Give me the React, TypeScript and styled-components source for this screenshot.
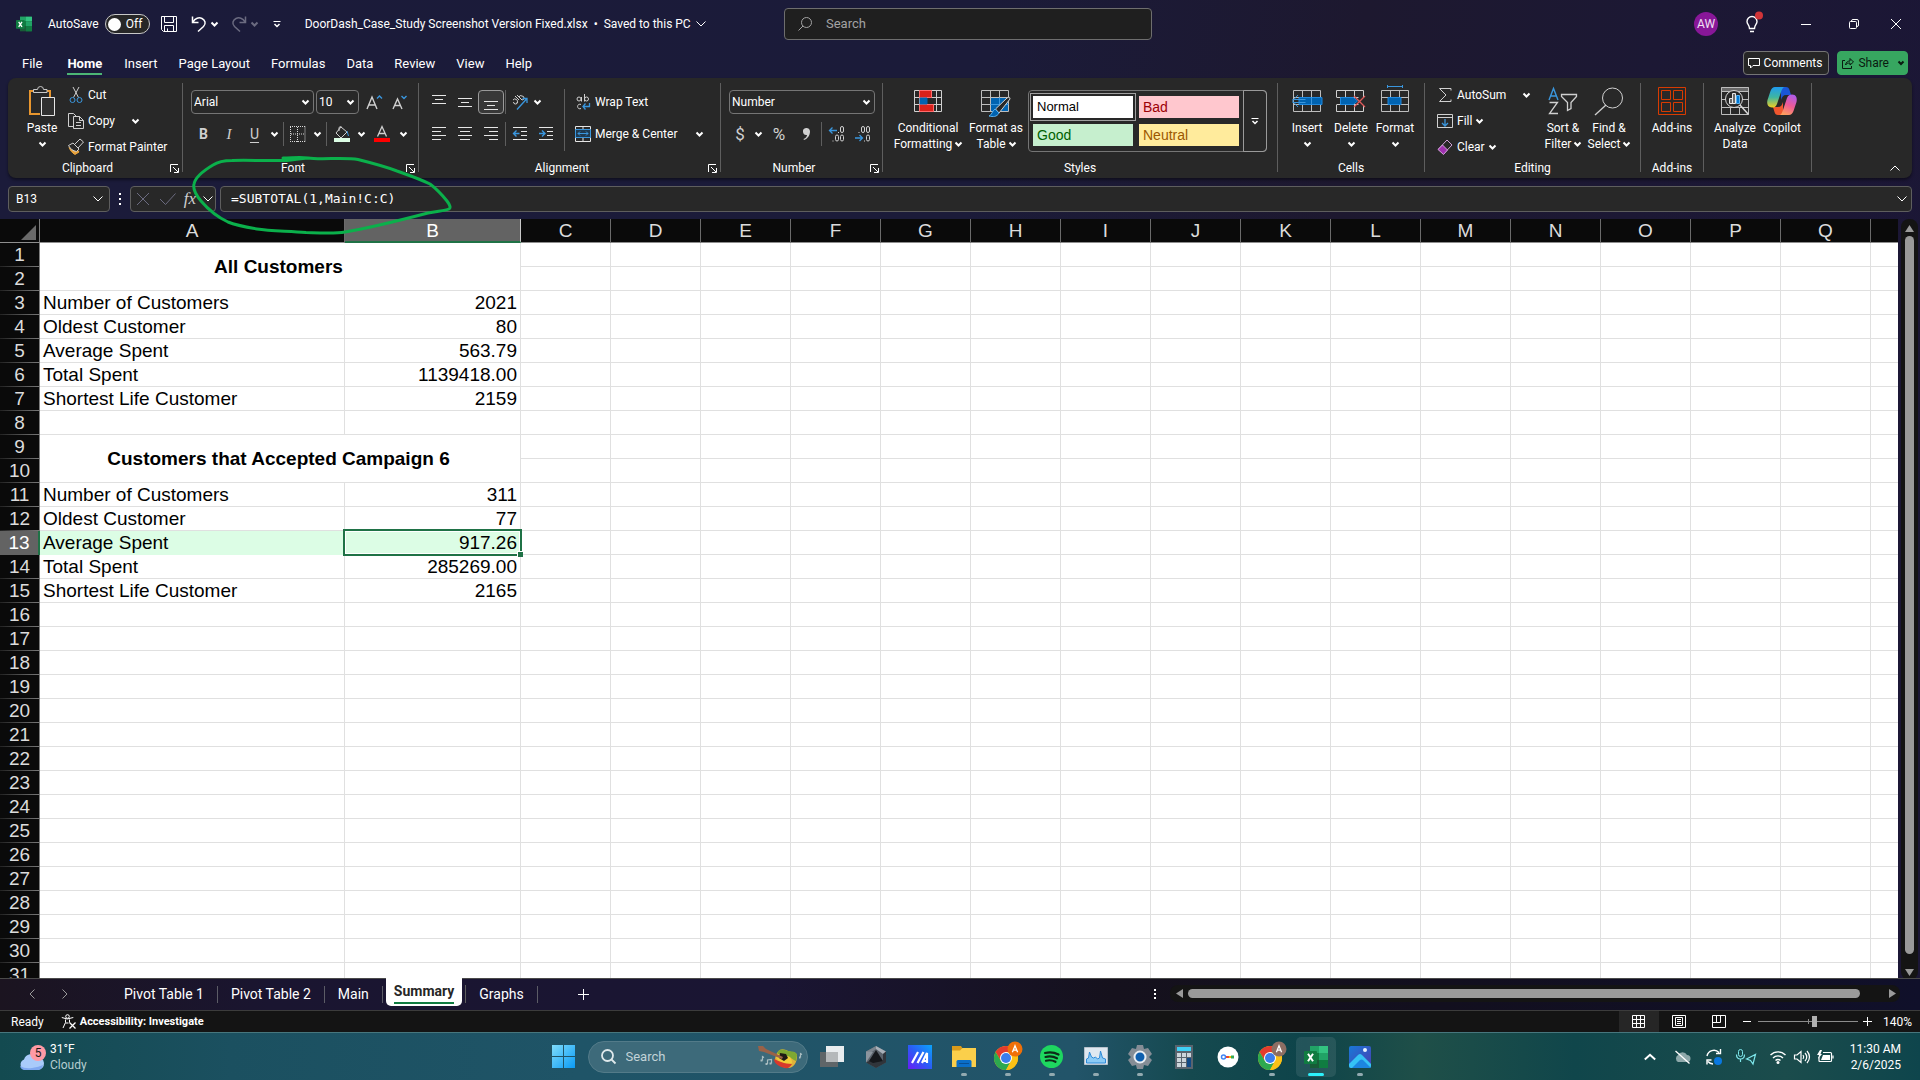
import React from 'react';
import styled, { createGlobalStyle, css } from 'styled-components';

const UI = `Roboto, "Open Sans", "Noto Sans", sans-serif`;
const SHEET = `"Liberation Sans", Arial, sans-serif`;

const Global = createGlobalStyle`
  *, *::before, *::after { box-sizing: border-box; }
  html, body { margin: 0; background: #1b1b3a; }
  button, input, select { font: inherit; color: inherit; margin: 0; padding: 0; border: 0; background: none; }
  button { cursor: pointer; }
  input:focus, select:focus { outline: none; }
  a { color: inherit; text-decoration: none; }
`;

const Window = styled.div`
  height: 100vh;
  display: flex;
  flex-direction: column;
  overflow: hidden;
  font: 12px/16px ${UI};
  color: #fff;
  background: linear-gradient(98deg, #1b1b3a 0%, #1b1b39 48%, #1d182f 66%, #1c1834 80%, #1b1636 100%);
`;

const Glyph = styled.svg<{ $w?: number; $h?: number }>`
  width: ${p => p.$w ?? 16}px;
  height: ${p => p.$h ?? 16}px;
  flex: none;
  display: block;
  fill: none;
  stroke: currentColor;
  stroke-width: 1;
  overflow: visible;
`;

type IconProps = { w?: number; h?: number; children: React.ReactNode };
const Icon = ({ w = 16, h = 16, children }: IconProps) => (
  <Glyph $w={w} $h={h} viewBox={`0 0 ${w} ${h}`} aria-hidden>{children}</Glyph>
);

const Chevron = ({ size = 7, sw = 2 }: { size?: number; sw?: number }) => (
  <Icon w={size} h={Math.ceil(size / 2) + 1}>
    <path strokeWidth={sw} d={`M.5 .5L${size / 2} ${size / 2}L${size - 0.5} .5`} />
  </Icon>
);

/* ---------- title bar ---------- */

const TitleBar = styled.header`
  flex: none;
  height: 48px;
  display: grid;
  grid-template-columns: 1fr 368px 1fr;
  align-items: center;
  padding-left: 16px;
`;
const TitleLeft = styled.div`
  display: flex;
  align-items: center;
  white-space: nowrap;
`;
const TitleRight = styled.div`
  display: flex;
  align-items: center;
  justify-content: flex-end;
  padding-right: 6px;
`;
const AutoSave = styled.label`
  display: flex;
  align-items: center;
  gap: 6px;
  margin: 0 11px 0 16px;
  cursor: pointer;
`;
const SwitchKnob = styled.input`
  appearance: none;
  width: 13px;
  height: 13px;
  border-radius: 50%;
  background: #fff;
`;
const Toggle = styled.span`
  width: 45px;
  height: 20px;
  display: flex;
  align-items: center;
  gap: 5px;
  padding-left: 2px;
  border: 1px solid #c8c8c8;
  border-radius: 10px;
  background: #272727;
`;
const IconButton = styled.button<{ $w?: number; $h?: number; $dim?: boolean; $active?: boolean }>`
  flex: none;
  width: ${p => p.$w ?? 26}px;
  height: ${p => p.$h ?? 24}px;
  display: flex;
  align-items: center;
  justify-content: center;
  color: ${p => (p.$dim ? '#6b6b80' : 'inherit')};
  ${p => p.$active && css`
    border: 1px solid #9a9a9a;
    border-radius: 4px;
    background: #383838;
  `}
`;
const FileName = styled.button`
  display: flex;
  align-items: center;
  gap: 5px;
  margin-left: 19px;
  white-space: pre;
`;
const SearchBox = styled.label`
  height: 32px;
  display: flex;
  align-items: center;
  gap: 14px;
  padding: 0 13px;
  border: 1px solid #6e6e6e;
  border-radius: 4px;
  background: #1f1f1f;
  color: #a3a3a3;
  font-size: 13px;
`;
const BareInput = styled.input`
  flex: 1;
  min-width: 0;
  &::placeholder { color: inherit; opacity: 1; }
`;
const Avatar = styled.button`
  width: 24px;
  height: 24px;
  border-radius: 50%;
  background: #881798;
  color: #f0e0f4;
  font-size: 12px;
  line-height: 24px;
`;

/* ---------- ribbon tabs ---------- */

const TabRow = styled.nav`
  flex: none;
  height: 30px;
  display: flex;
  align-items: flex-start;
  gap: 21px;
  padding: 3px 12px 0 22px;
  font-size: 13px;
`;
const RibbonTab = styled.a<{ $on?: boolean }>`
  height: 24px;
  line-height: 25px;
  margin: 0 ${p => (p.$on ? '1px 0 4px' : 0)};
  font-weight: ${p => (p.$on ? 700 : 400)};
  border-bottom: 2px solid ${p => (p.$on ? '#4cb575' : 'transparent')};
`;
const TabActions = styled.div`
  margin-left: auto;
  display: flex;
  gap: 8px;
  font-size: 12px;
`;
const ActionButton = styled.button<{ $share?: boolean }>`
  height: 24px;
  display: flex;
  align-items: center;
  gap: 4px;
  padding: 0 ${p => (p.$share ? 3 : 6)}px 0 4px;
  border: 1px solid ${p => (p.$share ? '#37a660' : '#757575')};
  border-radius: 4px;
  background: ${p => (p.$share ? '#37a660' : '#262626')};
  color: ${p => (p.$share ? '#0a1a10' : '#fff')};
`;

/* ---------- ribbon ---------- */

const Ribbon = styled.section`
  flex: none;
  height: 100px;
  margin: 0 8px;
  display: flex;
  border-radius: 8px;
  background: #282828;
  box-shadow: 0 2px 3px rgba(0, 0, 0, 0.45);
`;
const Group = styled.div<{ $w: number }>`
  flex: none;
  width: ${p => p.$w}px;
  display: flex;
  flex-direction: column;
`;
const GroupBody = styled.div<{ $pad?: number }>`
  height: 82px;
  display: flex;
  padding-left: ${p => p.$pad ?? 8}px;
`;
const GroupFoot = styled.div`
  height: 16px;
  display: flex;
  align-items: center;
`;
const GroupName = styled.span`
  flex: 1;
  text-align: center;
`;
const Rule = styled.span<{ $m?: string; $h?: string }>`
  flex: none;
  width: 1px;
  height: ${p => p.$h ?? 'auto'};
  margin: ${p => p.$m ?? '5px 0 6px'};
  background: #5e5e5e;
`;
const Stack = styled.div<{ $w?: number }>`
  width: ${p => (p.$w ? `${p.$w}px` : 'auto')};
  padding-top: 4px;
  display: flex;
  flex-direction: column;
`;
const Rows = styled.div`
  padding-top: 12px;
  display: flex;
  flex-direction: column;
  gap: 8px;
`;
const Row = styled.div`
  height: 24px;
  display: flex;
  align-items: center;
`;
const SmallButton = styled.button<{ $h?: number }>`
  height: ${p => p.$h ?? 26}px;
  display: flex;
  align-items: center;
  gap: 4px;
  white-space: nowrap;
`;
const Space = styled.span<{ $w: number }>`
  flex: none;
  width: ${p => p.$w}px;
`;
const BigButton = styled.button<{ $w: number }>`
  width: ${p => p.$w}px;
  height: 78px;
  padding-top: 9px;
  display: flex;
  flex-direction: column;
  align-items: center;
  white-space: nowrap;
`;
const BigIcon = styled.span`
  height: 28px;
  margin-bottom: 5px;
  display: flex;
  align-items: center;
`;
const Line = styled.span`
  height: 16px;
  display: flex;
  align-items: center;
  gap: 3px;
`;
const Combo = styled.label<{ $w: number }>`
  width: ${p => p.$w}px;
  height: 24px;
  display: grid;
  grid-template-columns: 1fr 11px;
  align-items: center;
  border: 1px solid #757575;
  border-radius: 4px;
`;
const Picker = styled.select`
  appearance: none;
  grid-area: 1 / 1 / 2 / 3;
  height: 22px;
  padding-left: 2px;
`;
const ComboArrow = styled.span`
  grid-area: 1 / 2 / 2 / 3;
  pointer-events: none;
`;
const Letter = styled.span<{ $size?: number; $b?: boolean; $i?: boolean; $u?: boolean }>`
  font-size: ${p => p.$size ?? 14}px;
  line-height: 16px;
  color: #d0d0d0;
  font-weight: ${p => (p.$b ? 700 : 400)};
  font-style: ${p => (p.$i ? 'italic' : 'normal')};
  font-family: ${p => (p.$i ? '"Liberation Serif", serif' : 'inherit')};
  text-decoration: ${p => (p.$u ? 'underline' : 'none')};
  text-underline-offset: 3px;
`;
const Gallery = styled.div`
  height: 62px;
  margin: 12px 0 0 4px;
  display: flex;
  border: 1px solid #757575;
  border-radius: 4px;
`;
const Swatches = styled.div`
  display: grid;
  grid-template-columns: 100px 100px;
  gap: 6px;
  padding: 5px 4px;
`;
const Swatch = styled.button<{ $bg: string; $fg: string; $on?: boolean }>`
  height: 22px;
  padding-left: 4px;
  text-align: left;
  font: ${p => (p.$on ? 13 : 14)}px/20px ${SHEET};
  background: ${p => p.$bg};
  color: ${p => p.$fg};
  box-shadow: ${p => (p.$on ? '0 0 0 2px #282828, 0 0 0 3px #a0a0a0' : 'none')};
`;
const GalleryMore = styled.button`
  width: 24px;
  margin: -1px -1px -1px 0;
  display: grid;
  place-items: center;
  border: 1px solid #9a9a9a;
  border-radius: 0 4px 4px 0;
`;
const Collapse = styled.button`
  margin: auto 12px 5px auto;
`;

/* ---------- formula bar ---------- */

const FormulaRow = styled.div`
  flex: none;
  height: 41px;
  display: flex;
  padding: 8px 8px 7px;
`;
const Field = styled.div<{ $w?: number }>`
  ${p => (p.$w ? `width: ${p.$w}px;` : 'flex: 1;')}
  height: 26px;
  display: flex;
  align-items: center;
  border: 1px solid #5e5e5e;
  border-radius: 4px;
  background: #282828;
`;
const NameInput = styled(BareInput)`
  padding-left: 7px;
  font-size: 12px;
`;
const FormulaInput = styled(BareInput)`
  padding-left: 10px;
  font: 13px/20px "DejaVu Sans Mono", "Liberation Mono", monospace;
`;
const Annotation = styled.svg`
  position: absolute;
  left: 190px;
  top: 152px;
  width: 266px;
  height: 86px;
  overflow: visible;
  pointer-events: none;
`;

/* ---------- sheet ---------- */

const SheetArea = styled.main`
  flex: 1;
  min-height: 0;
  display: flex;
`;
const SheetView = styled.div`
  flex: 1;
  min-width: 0;
  overflow: hidden;
  background: #fff;
`;
const Grid = styled.table`
  table-layout: fixed;
  width: 1961px;
  border-collapse: separate;
  border-spacing: 0;
  font: 19px/22px ${SHEET};
  color: #000;
`;
const Corner = styled.th`
  height: 24px;
  padding: 0 3px 2px 0;
  vertical-align: bottom;
  border-right: 1px solid #7d7d7d;
  border-bottom: 1px solid #8e8e8e;
  background: #0a0a0a;
  color: #6a6a6a;
  & > svg { margin-left: auto; }
`;
const ColHead = styled.th<{ $on?: boolean }>`
  height: 24px;
  padding: 0;
  font-weight: 400;
  line-height: 21px;
  color: ${p => (p.$on ? '#fff' : '#dcdcdc')};
  background: ${p => (p.$on ? '#636363' : '#0a0a0a')};
  border-right: 1px solid ${p => (p.$on ? '#c8c8c8' : '#6b6b6b')};
  border-bottom: ${p => (p.$on ? '2px solid #1f7246' : '1px solid #8e8e8e')};
`;
const RowHead = styled.th<{ $on?: boolean }>`
  height: 24px;
  padding: 0;
  font-weight: 400;
  color: ${p => (p.$on ? '#fff' : '#dcdcdc')};
  background: ${p => (p.$on ? '#636363' : 'linear-gradient(90deg, #222, #777) 0 100% / 100% 1px no-repeat #0a0a0a')};
  border-right: ${p => (p.$on ? '2px solid #1f7246' : '1px solid #7d7d7d')};
`;
const Cell = styled.td<{ $num?: boolean; $head?: boolean; $fill?: boolean; $edge?: boolean }>`
  position: ${p => (p.$edge ? 'relative' : 'static')};
  height: 24px;
  padding: ${p => (p.$num ? '0 3px 0 0' : p.$head ? '0 3px 0 0' : '0 0 0 3px')};
  white-space: nowrap;
  text-align: ${p => (p.$head ? 'center' : p.$num ? 'right' : 'left')};
  font-weight: ${p => (p.$head ? 700 : 400)};
  background: ${p => (p.$fill ? '#dcfde5' : '#fff')};
  border-right: 1px solid ${p => (p.$fill ? '#dcfde5' : '#e0e0e0')};
  border-bottom: 1px solid ${p => (p.$fill ? '#dcfde5' : '#e0e0e0')};
`;
const Selection = styled.span`
  position: absolute;
  inset: -2px;
  border: 2px solid #1f7246;
  box-shadow: inset 0 0 0 1px #fff;
  pointer-events: none;
  &::after {
    content: '';
    position: absolute;
    right: -3px;
    bottom: -3px;
    width: 6px;
    height: 6px;
    background: #1f7246;
    border: solid #fff;
    border-width: 1px 0 0 1px;
  }
`;
const VScroll = styled.div`
  flex: none;
  width: 17px;
  margin: 0 2px -2px 3px;
  padding: 6px 0 4px;
  display: flex;
  flex-direction: column;
  align-items: center;
  gap: 4px;
  border-radius: 8px;
  background: #141414;
  color: #9a9a9a;
`;
const Thumb = styled.div<{ $v?: boolean; $end: number }>`
  flex: 1;
  ${p => (p.$v ? `width: 9px; margin-bottom: ${p.$end}px;` : `height: 9px; margin-right: ${p.$end}px;`)}
  border-radius: 5px;
  background: #9a9a9a;
`;
const ArrowButton = styled.button`
  display: block;
`;

/* ---------- sheet tabs ---------- */

const SheetBar = styled.div`
  flex: none;
  height: 33px;
  display: flex;
  border-top: 1px solid #4a4a4a;
  border-bottom: 1px solid #3c3c3c;
  background: linear-gradient(90deg, #1b1420 0%, #1a1530 14%, #1a1533 40%, #15111d 58%, #120f1e 75%, #10102a 100%);
  font-size: 14px;
`;
const TabNav = styled.div`
  width: 111px;
  padding: 0 0 2px 19px;
  display: flex;
  align-items: center;
  gap: 7px;
  color: #9a9a9a;
`;
const SheetTabs = styled.div`
  flex: 1;
  display: flex;
  align-items: center;
  padding-bottom: 1px;
`;
const SheetTab = styled.a`
  padding: 0 13px;
  line-height: 17px;
  border-right: 1px solid #5c5c66;
`;
const CurrentTab = styled.a`
  align-self: flex-start;
  height: 28px;
  margin: -1px 3px 0;
  padding: 5px 8px 0;
  border-radius: 0 0 5px 5px;
  background: #fff;
  color: #262626;
  font-weight: 700;
  & > span {
    display: block;
    height: 21px;
    line-height: 17px;
    border-bottom: 2px solid #107c41;
  }
`;
const HScroll = styled.div`
  width: 38%;
  height: 17px;
  margin: 6px 20px 0 0;
  padding: 0 4px 0 6px;
  display: flex;
  align-items: center;
  gap: 5px;
  border-radius: 8px;
  background: #141414;
  color: #9a9a9a;
`;

/* ---------- status bar ---------- */

const StatusBar = styled.footer`
  flex: none;
  height: 21px;
  display: flex;
  align-items: center;
  padding: 0 8px 0 11px;
  background: #141414;
`;
const Access = styled.button`
  margin-left: 17px;
  display: flex;
  align-items: center;
  gap: 4px;
  font-size: 11px;
  font-weight: 700;
`;
const StatusRight = styled.div`
  margin-left: auto;
  height: 21px;
  display: flex;
  align-items: center;
`;
const ViewButton = styled(IconButton)<{ $lit?: boolean }>`
  height: 21px;
  background: ${p => (p.$lit ? '#262626' : 'none')};
`;
const Zoom = styled.input`
  appearance: none;
  width: 100px;
  height: 12px;
  margin: 0 5px;
  background:
    linear-gradient(#8c8c8c, #8c8c8c) 50% 50% / 1px 5px no-repeat,
    linear-gradient(#8c8c8c, #8c8c8c) 0 50% / 100% 1px no-repeat;
  &::-webkit-slider-thumb {
    appearance: none;
    width: 5px;
    height: 11px;
    background: #b0b0b0;
  }
`;
const ZoomValue = styled.button`
  width: 40px;
  text-align: right;
`;

/* ---------- taskbar ---------- */

const Taskbar = styled.div`
  flex: none;
  height: 48px;
  display: grid;
  grid-template-columns: 1fr auto 1fr;
  padding-left: 13px;
  border-top: 1px solid #47767d;
  background: linear-gradient(90deg, #134a50 0%, #1b5060 12%, #1f5467 30%, #225469 56%, #15494f 62%, #0e444a 68%, #1f4f48 74%, #10464b 82%, #1b4c4c 93%, #0e454c 100%);
`;
const Weather = styled.button`
  justify-self: start;
  padding-left: 6px;
  display: flex;
  align-items: center;
  gap: 6px;
  text-align: left;
`;
const WeatherArt = styled.span`
  position: relative;
  padding-top: 9px;
`;
const Badge = styled.span`
  position: absolute;
  top: 1px;
  left: 11px;
  width: 16px;
  height: 16px;
  border-radius: 50%;
  background: #ff9aa5;
  color: #1a1a1a;
  text-align: center;
`;
const Temps = styled.span`
  display: grid;
  & > span:last-child { color: #b5cdd0; }
`;
const Apps = styled.div`
  display: flex;
  align-items: center;
`;
const StartButton = styled.button`
  margin-right: 13px;
`;
const TaskSearch = styled.label`
  width: 220px;
  height: 32px;
  margin: 0 2px 0 0;
  padding: 0 4px 0 12px;
  display: flex;
  align-items: center;
  gap: 10px;
  border: 1px solid #537b89;
  border-radius: 16px;
  background: #3d6a7a;
  color: #c2d3d8;
  font-size: 13px;
`;
const AppButton = styled.button<{ $active?: boolean; $run?: boolean }>`
  position: relative;
  width: 40px;
  height: 40px;
  margin: 0 2px;
  display: grid;
  place-items: center;
  border-radius: 5px;
  background: ${p => (p.$active ? 'rgba(255,255,255,.09)' : 'none')};
  &::after {
    content: '';
    position: absolute;
    bottom: 1px;
    left: 50%;
    width: ${p => (p.$active ? 16 : 6)}px;
    height: 3px;
    margin-left: ${p => (p.$active ? -8 : -3)}px;
    border-radius: 2px;
    background: ${p => (p.$active ? '#2cf0fb' : p.$run ? '#92aab0' : 'transparent')};
  }
`;
const Tray = styled.div`
  justify-self: end;
  padding-right: 19px;
  display: flex;
  align-items: center;
`;
const TrayButton = styled.button<{ $gap: number }>`
  margin-right: ${p => p.$gap}px;
`;
const Clock = styled.button`
  text-align: right;
  display: grid;
`;

/* ---------- icons ---------- */

const BLUE = '#3a96dd';

const ExcelLogo = ({ size }: { size: number }) => (
  <Glyph $w={size} $h={size} viewBox="0 0 24 24" aria-hidden>
    <g stroke="none">
      <path fill="#185c37" d="M6 1h17v22H6z" />
      <path fill="#21a366" d="M6 1h9v7H6z" />
      <path fill="#33c481" d="M15 1h9v7h-9z" />
      <path fill="#107c41" d="M6 8h9v7H6z" />
      <path fill="#21a366" d="M15 8h9v7h-9z" />
      <path fill="#107c41" d="M15 15h9v8h-9z" />
      <rect fill="#107c41" x="0" y="6" width="13" height="13" rx="1" />
    </g>
    <path stroke="#fff" strokeWidth="2" d="M4 8.8l5 7.4M9 8.8l-5 7.4" />
  </Glyph>
);
const AlignIcon = ({ lines }: { lines: [number, number, number][] }) => (
  <Icon w={14} h={16}>
    {lines.map(([x1, x2, y]) => <path key={y} stroke="#e6e6e6" d={`M${x1} ${y}.5H${x2}`} />)}
  </Icon>
);
const Launcher = () => (
  <IconButton $w={15} $h={12} aria-label="More options">
    <Icon w={9} h={9}><path d="M.5 8V.5H8M3 3l5 5M8.5 4v4.5H4" /></Icon>
  </IconButton>
);
const MoreArrow = () => (
  <Icon w={8} h={8}><path d="M.5 1.5h7" /><path strokeWidth="1.5" d="M1.5 4L4 6.5 6.5 4" /></Icon>
);
const GridLines = () => (
  <path stroke="#bdbdbd" d="M.5 .5h27v21H.5zM.5 7.5h27M.5 14.5h27M9.5 .5v21M18.5 .5v21" />
);
const Chrome = ({ badge }: { badge: string }) => (
  <Icon w={28} h={28}>
    <g stroke="none">
      <circle cx="12" cy="15" r="12" fill="#fbc116" />
      <path fill="#e33b2e" d="M1.6 9A12 12 0 0 1 22.4 9H12L7 18z" />
      <path fill="#2da94f" d="M1.6 9A12 12 0 0 0 12 27l5-9-5-3-5 3z" />
      <path fill="#fbc116" d="M12 27A12 12 0 0 0 22.4 9H12l5 9z" />
      <circle cx="12" cy="15" r="6" fill="#fff" />
      <circle cx="12" cy="15" r="5" fill="#3b7ded" />
      <circle cx="21" cy="6" r="7.5" fill={badge} />
    </g>
    <path stroke="#fff" strokeWidth="1.3" d="M18.4 9.3L21 2.8l2.6 6.5M19.4 7.2h3.2" />
  </Icon>
);

/* ---------- data ---------- */

const COLUMNS = 'ABCDEFGHIJKLMNOPQ'.split('');
const DATA: Record<number, { head?: string; label?: string; value?: string }> = {
  1: { head: 'All Customers' },
  3: { label: 'Number of Customers', value: '2021' },
  4: { label: 'Oldest Customer', value: '80' },
  5: { label: 'Average Spent', value: '563.79' },
  6: { label: 'Total Spent', value: '1139418.00' },
  7: { label: 'Shortest Life Customer', value: '2159' },
  9: { head: 'Customers that Accepted Campaign 6' },
  11: { label: 'Number of Customers', value: '311' },
  12: { label: 'Oldest Customer', value: '77' },
  13: { label: 'Average Spent', value: '917.26' },
  14: { label: 'Total Spent', value: '285269.00' },
  15: { label: 'Shortest Life Customer', value: '2165' },
};
const SELECTED_ROW = 13;

const SheetRow = ({ n }: { n: number }) => {
  const row = DATA[n] ?? {};
  const covered = Boolean(DATA[n - 1]?.head);
  const on = n === SELECTED_ROW;
  return (
    <tr>
      <RowHead scope="row" $on={on}>{n}</RowHead>
      {row.head && <Cell $head colSpan={2} rowSpan={2}>{row.head}</Cell>}
      {!row.head && !covered && (
        <>
          <Cell $fill={on}>{row.label}</Cell>
          <Cell $num $fill={on} $edge={on}>{row.value}{on && <Selection />}</Cell>
        </>
      )}
      {COLUMNS.slice(2).map(c => <Cell key={c} />)}
      <Cell />
    </tr>
  );
};

const TitleSection = () => (
  <TitleBar>
    <TitleLeft>
      <ExcelLogo size={16} />
      <AutoSave>
        AutoSave
        <Toggle><SwitchKnob type="checkbox" role="switch" />Off</Toggle>
      </AutoSave>
      <IconButton $w={17} aria-label="Save">
        <Icon><path d="M.5 .5h15v15H2.5l-2-2zM3.5 .5v6h9v-6M3.5 15.5v-6h9v6M6.5 15.5v-3" /></Icon>
      </IconButton>
      <Space $w={12} />
      <IconButton $w={18} aria-label="Undo">
        <Icon><path strokeWidth="1.5" d="M1.5 .5v6h6M2 6C4 2 8 1 11 2.5s4.5 5 1.5 8L7 15.5" /></Icon>
      </IconButton>
      <IconButton $w={14} aria-label="Undo list"><Chevron /></IconButton>
      <Space $w={8} />
      <IconButton $w={18} $dim aria-label="Redo">
        <Icon><path strokeWidth="1.5" d="M14.5 .5v6h-6M14 6C12 2 8 1 5 2.5S.5 7.5 3.5 10.5L9 15.5" /></Icon>
      </IconButton>
      <IconButton $w={14} $dim aria-label="Redo list"><Chevron /></IconButton>
      <Space $w={6} />
      <IconButton $w={18} aria-label="Customize toolbar"><MoreArrow /></IconButton>
      <FileName>DoorDash_Case_Study Screenshot Version Fixed.xlsx  •  Saved to this PC<Chevron size={10} sw={1} /></FileName>
    </TitleLeft>
    <SearchBox>
      <Icon w={14} h={14}><circle cx="8.5" cy="5.5" r="5" /><path d="M5 9L.5 13.5" /></Icon>
      <BareInput type="search" placeholder="Search" aria-label="Search" />
    </SearchBox>
    <TitleRight>
      <Avatar>AW</Avatar>
      <Space $w={22} />
      <IconButton aria-label="Tips">
        <Icon w={16} h={20}>
          <path strokeWidth="1.4" d="M4.5 14.5C4.5 11 2 10.5 2 7.5a5 5 0 0 1 10 0c0 3-2.5 3.500-2.500 7zM5 17.5h4" />
          <circle cx="14" cy="1.5" r="4" fill="#d13438" stroke="none" />
        </Icon>
      </IconButton>
      <Space $w={16} />
      <IconButton $w={48} $h={48} aria-label="Minimize"><Icon w={10} h={10}><path d="M0 5.5h10" /></Icon></IconButton>
      <IconButton $w={48} $h={48} aria-label="Restore">
        <Icon w={10} h={10}><rect x=".5" y="2.5" width="7" height="7" rx="1" /><path d="M2.5 2.5V2Q2.5 .5 4 .5H8Q9.5 .5 9.5 2V6Q9.5 7.5 8 7.5" /></Icon>
      </IconButton>
      <IconButton $w={36} $h={48} aria-label="Close"><Icon w={10} h={10}><path d="M0 0l10 10M10 0L0 10" /></Icon></IconButton>
    </TitleRight>
  </TitleBar>
);

const RibbonTabs = () => (
  <TabRow>
    {['File', 'Home', 'Insert', 'Page Layout', 'Formulas', 'Data', 'Review', 'View', 'Help'].map(t => (
      <RibbonTab key={t} href="#" $on={t === 'Home'}>{t}</RibbonTab>
    ))}
    <TabActions>
      <ActionButton>
        <Icon w={12} h={12}><path d="M.5 1.5h11v7H5L2.5 11V8.5h-2z" /></Icon>
        Comments
      </ActionButton>
      <ActionButton $share>
        <Icon w={12} h={12}><path d="M3 3.5H.5v8h9V9M3.5 8C4 5 6 4 8 4V1.5L11.5 5 8 8V6C6 6 4.5 6.5 3.5 8z" /></Icon>
        Share
        <Space $w={1} />
        <Chevron size={6} />
      </ActionButton>
    </TabActions>
  </TabRow>
);

const Clipboard = () => (
  <Group $w={174}>
    <GroupBody>
      <BigButton $w={52}>
        <BigIcon>
          <Icon w={28} h={30}>
            <path stroke="#e8962e" strokeWidth="2" d="M7 5H2v23h10M17 5h5v6" />
            <path stroke="#c8c8c8" fill="#282828" d="M5.5 6.5v-3h4a3 3 0 0 1 6 0h3.500v3z" />
            <path stroke="#e6e6e6" fill="#303030" d="M13.5 11.5h13v18h-13z" />
          </Icon>
        </BigIcon>
        <Line>Paste</Line>
        <Line><Chevron /></Line>
      </BigButton>
      <Stack>
        <SmallButton>
          <Icon><path stroke="#d0d0d0" d="M5 0l5.5 10.5M11 0L5.5 10.5" /><circle cx="4.5" cy="13" r="2.5" stroke={BLUE} /><circle cx="11.5" cy="13" r="2.5" stroke={BLUE} /></Icon>
          Cut
        </SmallButton>
        <SmallButton>
          <Icon><path stroke="#d0d0d0" d="M5 13.5H.5V.5h5L8 3M5.500 3.500h6l4 4v8h-10zM11.500 3.500v4h4M8 9.500h5M8 12.500h5" /></Icon>
          Copy<Space $w={9} /><Chevron />
        </SmallButton>
        <SmallButton>
          <Icon>
            <path fill="#e8a33d" stroke="#e8a33d" d="M2 8l6 1 3 4-4 2.500C4 14 2 11 1 8z" />
            <path fill="#282828" stroke="#d0d0d0" d="M.5 6.500L5 4l6 6-2.500 2.500C5 12 2 9.500 .5 6.500zM6.500 5.500L12 0l3.500 3-5.500 6" />
          </Icon>
          Format Painter
        </SmallButton>
      </Stack>
    </GroupBody>
    <GroupFoot><GroupName>Clipboard</GroupName><Launcher /></GroupFoot>
  </Group>
);

const FontGroup = () => (
  <Group $w={235}>
    <GroupBody>
      <Rows>
        <Row>
          <Combo $w={123}><Picker aria-label="Font"><option>Arial</option></Picker><ComboArrow><Chevron /></ComboArrow></Combo>
          <Space $w={2} />
          <Combo $w={43}><Picker aria-label="Font size"><option>10</option></Picker><ComboArrow><Chevron /></ComboArrow></Combo>
          <Space $w={2} />
          <IconButton $w={25} aria-label="Increase font size"><Icon><path stroke="#d0d0d0" strokeWidth="1.4" d="M1 15L6 3l5 12M2.800 11h6.400" /><path stroke={BLUE} strokeWidth="1.4" d="M11 4.500l2.500-2.500L16 4.500" /></Icon></IconButton>
          <IconButton aria-label="Decrease font size"><Icon><path stroke="#d0d0d0" strokeWidth="1.4" d="M2 15L6.500 5 11 15M3.600 11.500h5.800" /><path stroke={BLUE} strokeWidth="1.4" d="M10.500 2L13 4.500 15.500 2" /></Icon></IconButton>
        </Row>
        <Row>
          <IconButton $w={25} aria-label="Bold"><Letter $b>B</Letter></IconButton>
          <IconButton aria-label="Italic"><Letter $i $size={15}>I</Letter></IconButton>
          <IconButton $w={25} aria-label="Underline"><Letter $u>U</Letter></IconButton>
          <IconButton $w={14} aria-label="Underline styles"><Chevron /></IconButton>
          <Rule $m="0 2px" $h="24px" />
          <IconButton $w={24} aria-label="Borders"><Icon><path stroke="#d8d8d8" strokeDasharray="1 1" d="M0 .5h15M.5 1v15M15 .5v15M0 15.5h15M7.5 1v15M1 8h14" /></Icon></IconButton>
          <IconButton $w={14} aria-label="Border styles"><Chevron /></IconButton>
          <Rule $m="0 2px" $h="24px" />
          <IconButton $w={25} aria-label="Fill color">
            <Icon><path stroke="#d0d0d0" d="M7 1l6 5-6 6-5-5zM5 5V1.500Q6.500-.5 8 1.500" /><path fill={BLUE} stroke={BLUE} d="M13 5l1.500 5" /><path stroke="#dcfde5" strokeWidth="4" d="M0 14h16" /></Icon>
          </IconButton>
          <IconButton $w={14} aria-label="Fill colors"><Chevron /></IconButton>
          <IconButton $w={28} aria-label="Font color">
            <Icon><path stroke="#d0d0d0" strokeWidth="1.3" d="M3.500 10.500L8 .5l4.500 10M5 7.500h6" /><path stroke="#f00" strokeWidth="4" d="M0 14h16" /></Icon>
          </IconButton>
          <IconButton $w={14} aria-label="Font colors"><Chevron /></IconButton>
        </Row>
      </Rows>
    </GroupBody>
    <GroupFoot><GroupName>Font</GroupName><Launcher /></GroupFoot>
  </Group>
);

const AlignmentGroup = () => (
  <Group $w={301}>
    <GroupBody $pad={7}>
      <Rows>
        <Row>
          <IconButton aria-label="Top align"><AlignIcon lines={[[0, 14, 1], [3, 11, 5], [0, 14, 9]]} /></IconButton>
          <IconButton aria-label="Middle align"><AlignIcon lines={[[0, 14, 4], [3, 11, 8], [0, 14, 12]]} /></IconButton>
          <IconButton $active aria-label="Bottom align"><AlignIcon lines={[[0, 14, 7], [3, 11, 11], [0, 14, 15]]} /></IconButton>
          <Rule $m="0 1px" $h="24px" />
          <IconButton $w={25} aria-label="Orientation">
            <Icon><path stroke="#d0d0d0" d="M1 6a2 2 0 1 1 4 3M3 2l4 4M1.500 8a2 2 0 0 0 4 0M5 1l5 5a2 2 0 0 0 0-4 2 2 0 0 0-3 1" /><path stroke={BLUE} strokeWidth="1.3" d="M5 15.500L15 4.500M10.500 4.500H15V9" /></Icon>
          </IconButton>
          <IconButton $w={10} aria-label="Orientation list"><Chevron /></IconButton>
        </Row>
        <Row>
          <IconButton aria-label="Align left"><AlignIcon lines={[[0, 14, 1], [0, 9, 5], [0, 14, 9], [0, 9, 13]]} /></IconButton>
          <IconButton aria-label="Center"><AlignIcon lines={[[0, 14, 1], [2, 12, 5], [0, 14, 9], [2, 12, 13]]} /></IconButton>
          <IconButton aria-label="Align right"><AlignIcon lines={[[0, 14, 1], [5, 14, 5], [0, 14, 9], [5, 14, 13]]} /></IconButton>
          <Rule $m="0 1px" $h="24px" />
          <IconButton aria-label="Decrease indent">
            <Icon w={14} h={16}><path stroke="#e6e6e6" d="M0 1.500h14M8 5.500h6M8 9.500h6M0 13.500h14" /><path stroke={BLUE} strokeWidth="1.4" d="M6.500 7.500H.5M3.500 4.500l-3 3 3 3" /></Icon>
          </IconButton>
          <IconButton aria-label="Increase indent">
            <Icon w={14} h={16}><path stroke="#e6e6e6" d="M0 1.500h14M8 5.500h6M8 9.500h6M0 13.500h14" /><path stroke={BLUE} strokeWidth="1.4" d="M0 7.500h6M3 4.500l3 3-3 3" /></Icon>
          </IconButton>
        </Row>
      </Rows>
      <Rule $m="11px 10px 9px 5px" />
      <Rows>
        <SmallButton $h={24}>
          <Icon>
            <g stroke="#d0d0d0">
              <circle cx="4" cy="5" r="2" /><path d="M6.500 3v4.500M9.500 0v7.500" /><circle cx="11.500" cy="5" r="2" />
              <path d="M6 10.500a2.300 2.300 0 1 0 0 4" />
            </g>
            <path stroke={BLUE} strokeWidth="1.3" d="M14.500 9v3.500H8M10.500 9.500L8 12.500l2.500 3" />
          </Icon>
          Wrap Text
        </SmallButton>
        <SmallButton $h={24}>
          <Icon><path stroke="#e6e6e6" d="M.5 .5h15v15H.5zM8 .5v3M8 12v3.500" /><path stroke={BLUE} fill="#1f3a50" d="M.5 3.500h15v8H.5z" /><path stroke={BLUE} d="M3 7.500h10M5 5.500l-2 2 2 2M11 5.500l2 2-2 2" /></Icon>
          Merge &amp; Center<Space $w={11} /><Chevron />
        </SmallButton>
      </Rows>
    </GroupBody>
    <GroupFoot><GroupName>Alignment</GroupName><Launcher /></GroupFoot>
  </Group>
);

const Decimals = ({ more }: { more?: boolean }) => (
  <Icon>
    <g stroke="#d0d0d0">
      {more
        ? <><rect x="11.5" y=".5" width="3" height="6" rx="1.5" /><rect x="6.5" y="9" width="3" height="6" rx="1.5" /><rect x="11.5" y="9" width="3" height="6" rx="1.5" /><path d="M3.500 15h1M9 6.500h1" /></>
        : <><rect x="6.5" y=".5" width="3" height="6" rx="1.5" /><rect x="11.5" y=".5" width="3" height="6" rx="1.5" /><rect x="11.5" y="9" width="3" height="6" rx="1.5" /><path d="M3.500 6.500h1M9 15h1" /></>}
    </g>
    <path stroke={BLUE} strokeWidth="1.3" d={more ? 'M8 4.500H.5M3.500 1.500l-3 3 3 3' : 'M0 12h7.500M4.500 9l3 3-3 3'} />
  </Icon>
);

const NumberGroup = () => (
  <Group $w={161}>
    <GroupBody>
      <Rows>
        <Row>
          <Combo $w={146}><Picker aria-label="Number format"><option>Number</option></Picker><ComboArrow><Chevron /></ComboArrow></Combo>
        </Row>
        <Row>
          <IconButton $w={22} aria-label="Currency"><Letter $size={17}>$</Letter></IconButton>
          <IconButton $w={14} aria-label="Currency list"><Chevron /></IconButton>
          <IconButton $w={28} aria-label="Percent"><Letter $size={17}>%</Letter></IconButton>
          <IconButton $w={26} aria-label="Comma style">
            <Icon w={8} h={12}><path fill="#d0d0d0" stroke="none" d="M4 0a3.500 3.500 0 0 1 4 3.500C8 8 5 11 2 12l-.5-1C4 10 5 8.500 5 7a3.500 3.500 0 1 1-1-7z" /></Icon>
          </IconButton>
          <Rule $m="0 2px" $h="24px" />
          <IconButton aria-label="Increase decimal"><Decimals more /></IconButton>
          <IconButton aria-label="Decrease decimal"><Decimals /></IconButton>
        </Row>
      </Rows>
    </GroupBody>
    <GroupFoot><GroupName>Number</GroupName><Launcher /></GroupFoot>
  </Group>
);

const StylesGroup = () => (
  <Group $w={394}>
    <GroupBody $pad={5}>
      <BigButton $w={80}>
        <BigIcon>
          <Icon w={28} h={22}>
            <path stroke="#d0d0d0" d="M.5 .5h27v21H.5zM.5 7.500h27M.5 14.500h27M5.500 .5v21M22.500 .5v21" />
            <path fill="#d9211b" stroke="#ff6b6b" d="M5.500 .5h12v7h-12zM5.500 14.500h14v7h-14z" />
            <path fill="#0063b1" stroke="#0063b1" d="M6 8h7v6H6z" />
          </Icon>
        </BigIcon>
        <Line>Conditional</Line>
        <Line>Formatting<Chevron /></Line>
      </BigButton>
      <BigButton $w={56}>
        <BigIcon>
          <Icon w={30} h={22}>
            <GridLines />
            <path fill="#0063b1" stroke="none" d="M10 8h17v13H10z" />
            <path stroke={BLUE} d="M9.500 14.500h18M18.500 7.500v14" />
            <path fill="#282828" stroke="#d0d0d0" d="M14.500 19L26 8q3-2 3 1L18 23z" />
            <path fill="#0063b1" stroke="#58b0f0" d="M14 19l4 4c-2 4-6 4-10 3 3-1 3-5 6-7z" />
          </Icon>
        </BigIcon>
        <Line>Format as</Line>
        <Line>Table<Chevron /></Line>
      </BigButton>
      <Gallery>
        <Swatches>
          <Swatch $on $bg="#fff" $fg="#000">Normal</Swatch>
          <Swatch $bg="#ffc7ce" $fg="#9c0006">Bad</Swatch>
          <Swatch $bg="#c6efce" $fg="#006100">Good</Swatch>
          <Swatch $bg="#ffeb9c" $fg="#9c5700">Neutral</Swatch>
        </Swatches>
        <GalleryMore aria-label="More styles"><MoreArrow /></GalleryMore>
      </Gallery>
    </GroupBody>
    <GroupFoot><GroupName>Styles</GroupName></GroupFoot>
  </Group>
);

const CellsGroup = () => (
  <Group $w={146}>
    <GroupBody $pad={7}>
      <BigButton $w={44}>
        <BigIcon>
          <Icon w={30} h={22}>
            <g transform="translate(1 0)"><GridLines /></g>
            <path fill="#0063b1" stroke="#1f88dd" d="M7 7.500h23v7H7z" />
            <path stroke="#3a96dd" d="M19.500 7v8M13.500 9.500H.5M13.500 12.500H.5M6 5L.5 11 6 17" />
          </Icon>
        </BigIcon>
        <Line>Insert</Line>
        <Line><Chevron /></Line>
      </BigButton>
      <BigButton $w={44}>
        <BigIcon>
          <Icon w={30} h={22}>
            <path stroke="#d0d0d0" d="M.5 7V.5h27V7M.5 7.500h22M.5 15v6.500h27V15M.5 14.500h22M9.500 .5v7M18.500 .5v7M9.500 14.500v7M18.500 14.500v7" />
            <path fill="#0063b1" stroke="#1f88dd" d="M4.500 7.500h13l4 3.500-4 3.500h-13z" />
            <path stroke="#e05a5a" strokeWidth="1.3" d="M18 6l11 11M29 6L18 17" />
          </Icon>
        </BigIcon>
        <Line>Delete</Line>
        <Line><Chevron /></Line>
      </BigButton>
      <BigButton $w={44}>
        <BigIcon>
          <Icon w={28} h={22}>
            <GridLines />
            <path fill="#0063b1" stroke="#1f88dd" d="M7 7.500h13v7H7z" />
            <path stroke={BLUE} d="M6.500-5v3M21.500-5v3M6.500-3.500h15" />
          </Icon>
        </BigIcon>
        <Line>Format</Line>
        <Line><Chevron /></Line>
      </BigButton>
    </GroupBody>
    <GroupFoot><GroupName>Cells</GroupName></GroupFoot>
  </Group>
);

const EditingGroup = () => (
  <Group $w={215}>
    <GroupBody $pad={12}>
      <Stack $w={103}>
        <SmallButton>
          <Icon><path stroke="#d0d0d0" d="M14 3.500V1.500H2.500L9 8l-6.500 6.500H14v-2" /></Icon>
          AutoSum<Space $w={9} /><Chevron />
        </SmallButton>
        <SmallButton>
          <Icon><path stroke="#d0d0d0" d="M.5 1.500h15v13H.5zM.5 4.500h15" /><path stroke={BLUE} strokeWidth="1.3" d="M8 6v7M5 10l3 3 3-3" /></Icon>
          Fill<Chevron />
        </SmallButton>
        <SmallButton>
          <Icon><path stroke="#d0a0d8" d="M10 1l5 5-8.500 9-5-5z" /><path fill="#a030b0" stroke="#d0a0d8" d="M5.500 6l5 5-4 4.500-5.500-5z" /></Icon>
          Clear<Chevron />
        </SmallButton>
      </Stack>
      <BigButton $w={46}>
        <BigIcon>
          <Icon w={30} h={28}>
            <path stroke={BLUE} strokeWidth="1.4" d="M1 13L5.500 1.500 10 13M2.500 9h6" />
            <path stroke="#d0d0d0" strokeWidth="1.3" d="M1.500 15.500h8l-8 11h8.500" />
            <path stroke="#d0d0d0" strokeWidth="1.3" d="M13.500 7.500h15v2L23 15.500v6L19.500 23.500v-8L13.500 9.500z" />
          </Icon>
        </BigIcon>
        <Line>Sort &amp;</Line>
        <Line>Filter<Chevron /></Line>
      </BigButton>
      <BigButton $w={46}>
        <BigIcon><Icon w={30} h={28}><circle cx="18.5" cy="11" r="10" stroke="#d0d0d0" /><path stroke="#d0d0d0" strokeWidth="1.3" d="M12 18L1 28" /></Icon></BigIcon>
        <Line>Find &amp;</Line>
        <Line>Select<Chevron /></Line>
      </BigButton>
    </GroupBody>
    <GroupFoot><GroupName>Editing</GroupName></GroupFoot>
  </Group>
);

const AddinsGroup = () => (
  <Group $w={62}>
    <GroupBody $pad={4}>
      <BigButton $w={54}>
        <BigIcon><Icon w={28} h={28}><path stroke="#d83b01" d="M.5 .5h27v27H.5zM3.500 3.500h9v9h-9zM15.500 3.500h9v9h-9zM3.500 15.500h9v9h-9zM15.500 15.500h9v9h-9z" /></Icon></BigIcon>
        <Line>Add-ins</Line>
      </BigButton>
    </GroupBody>
    <GroupFoot><GroupName>Add-ins</GroupName></GroupFoot>
  </Group>
);

const AnalyzeGroup = () => (
  <Group $w={107}>
    <GroupBody $pad={6}>
      <BigButton $w={50}>
        <BigIcon>
          <Icon w={28} h={28}>
            <path fill="#6a6a6a" stroke="none" d="M0 0h28v4H0z" />
            <path stroke="#bdbdbd" d="M.5 .5h27v27H.5zM.5 4.500h27M.5 12.500h27M.5 20.500h27M9.500 20v7M18.500 20v7" />
            <circle cx="13" cy="12" r="8.5" fill="#282828" stroke="#d8d8d8" />
            <path stroke="#e6e6e6" fill="#6a6a6a" d="M8.500 11.500h3v5h-3zM11.500 6.500h3v10h-3z" />
            <path fill="#0078d4" stroke="#58b0f0" d="M15.500 8.500h3v8h-3z" />
            <path stroke="#d8d8d8" strokeWidth="1.5" d="M19 18l8.500 9.500" />
          </Icon>
        </BigIcon>
        <Line>Analyze</Line>
        <Line>Data</Line>
      </BigButton>
      <BigButton $w={44}>
        <BigIcon>
          <Icon w={30} h={28}>
            <defs>
              <linearGradient id="cpA" x1="0" y1="0" x2="0" y2="1"><stop offset="0" stopColor="#1f9bf0" /><stop offset=".5" stopColor="#3fb6a0" /><stop offset="1" stopColor="#f2cf20" /></linearGradient>
              <linearGradient id="cpB" x1=".7" y1="0" x2=".3" y2="1"><stop offset="0" stopColor="#b05be8" /><stop offset=".5" stopColor="#ee5a96" /><stop offset="1" stopColor="#ffa15c" /></linearGradient>
            </defs>
            <g stroke="none">
              <path fill="#1a56d6" d="M14 0h5c2 0 3 1 3.500 3L24 8h-5c-3 0-4 2-5 5z" />
              <path fill="#f0562e" d="M6 20h5c3 0 4-2 5-5v13h-5c-2 0-3-1-3.500-3z" />
              <path fill="url(#cpA)" d="M8 0h10c-2 0-3 2-4 5l-4 12c-1 3-3 3.500-5 3.500C1 20.500-.5 17 .5 13L3.500 4C4.500 1.500 6 0 8 0z" />
              <path fill="url(#cpB)" d="M22 28H12c2 0 3-2 4-5l4-12c1-3 3-3.500 5-3.500 4 0 5.500 3.500 4.500 7.500l-3 9c-1 2.500-2.500 4-4.500 4z" />
            </g>
          </Icon>
        </BigIcon>
        <Line>Copilot</Line>
      </BigButton>
    </GroupBody>
  </Group>
);

const FormulaBar = () => (
  <FormulaRow>
    <Field $w={102}>
      <NameInput defaultValue="B13" aria-label="Name box" />
      <IconButton $w={22} aria-label="Names"><Chevron size={10} sw={1} /></IconButton>
    </Field>
    <IconButton $w={20} $h={26} aria-label="Resize"><Icon w={2} h={12}><path strokeWidth="2" strokeDasharray="2 3" d="M1 0v12" /></Icon></IconButton>
    <Field $w={86}>
      <IconButton $w={24} $dim aria-label="Cancel"><Icon w={12} h={12}><path d="M0 0l12 12M12 0L0 12" /></Icon></IconButton>
      <IconButton $w={24} $dim aria-label="Enter"><Icon w={15} h={12}><path d="M0 6l5.500 5.500L15.500 .5" /></Icon></IconButton>
      <IconButton $w={22} aria-label="Insert function"><Letter $i $size={17}>fx</Letter></IconButton>
      <IconButton $w={14} aria-label="Functions"><Chevron size={10} sw={1} /></IconButton>
    </Field>
    <Space $w={4} />
    <Field>
      <FormulaInput defaultValue="=SUBTOTAL(1,Main!C:C)" aria-label="Formula" spellCheck={false} />
      <IconButton $w={18} aria-label="Expand formula bar"><Chevron size={10} sw={1} /></IconButton>
    </Field>
  </FormulaRow>
);

const Sheet = () => (
  <SheetArea>
    <SheetView>
      <Grid>
        <colgroup>
          <col width={40} /><col width={305} /><col width={176} />
          {COLUMNS.slice(2).map(c => <col key={c} width={90} />)}
          <col width={90} />
        </colgroup>
        <thead>
          <tr>
            <Corner><Icon w={15} h={15}><path fill="currentColor" stroke="none" d="M15 0v15H0z" /></Icon></Corner>
            {COLUMNS.map(c => <ColHead key={c} scope="col" $on={c === 'B'}>{c}</ColHead>)}
            <ColHead />
          </tr>
        </thead>
        <tbody>
          {Array.from({ length: 31 }, (_, i) => <SheetRow key={i} n={i + 1} />)}
        </tbody>
      </Grid>
    </SheetView>
    <VScroll>
      <ArrowButton aria-label="Scroll up"><Icon w={9} h={7}><path fill="currentColor" stroke="none" d="M4.500 0L9 7H0z" /></Icon></ArrowButton>
      <Thumb $v $end={11} />
      <ArrowButton aria-label="Scroll down"><Icon w={9} h={7}><path fill="currentColor" stroke="none" d="M4.500 7L9 0H0z" /></Icon></ArrowButton>
    </VScroll>
  </SheetArea>
);

const SheetFooter = () => (
  <SheetBar>
    <TabNav>
      <IconButton aria-label="Previous sheet"><Icon w={6} h={10}><path d="M5.500 .5L1 5l4.500 4.500" /></Icon></IconButton>
      <IconButton aria-label="Next sheet"><Icon w={6} h={10}><path d="M.5 .5L5 5 .5 9.500" /></Icon></IconButton>
    </TabNav>
    <SheetTabs>
      <SheetTab href="#">Pivot Table 1</SheetTab>
      <SheetTab href="#">Pivot Table 2</SheetTab>
      <SheetTab href="#">Main</SheetTab>
      <CurrentTab href="#"><span>Summary</span></CurrentTab>
      <Rule $m="0" $h="18px" />
      <SheetTab href="#">Graphs</SheetTab>
      <Space $w={33} />
      <IconButton aria-label="New sheet"><Icon w={11} h={11}><path d="M5.500 0v11M0 5.500h11" /></Icon></IconButton>
    </SheetTabs>
    <IconButton $w={30} $h={29} aria-label="Resize tabs"><Icon w={2} h={10}><path strokeWidth="2" strokeDasharray="2 2" d="M1 0v10" /></Icon></IconButton>
    <HScroll>
      <ArrowButton aria-label="Scroll left"><Icon w={7} h={9}><path fill="currentColor" stroke="none" d="M0 4.500L7 0v9z" /></Icon></ArrowButton>
      <Thumb $end={24} />
      <ArrowButton aria-label="Scroll right"><Icon w={7} h={9}><path fill="currentColor" stroke="none" d="M7 4.500L0 0v9z" /></Icon></ArrowButton>
    </HScroll>
  </SheetBar>
);

const Status = () => (
  <StatusBar>
    Ready
    <Access>
      <Icon w={15} h={15}>
        <circle cx="6.5" cy="2.5" r="1.8" />
        <path d="M.8 3.500q5 3 11.500 0M4.500 5.500v3L2 14M8.500 5.500v3M4.500 9h3" />
        <path strokeWidth="1.3" d="M8.500 8.500l6 6M14.500 8.500l-6 6" />
      </Icon>
      Accessibility: Investigate
    </Access>
    <StatusRight>
      <ViewButton $w={40} $lit aria-label="Normal view"><Icon w={14} h={14}><path d="M.5 .5h12v12H.5zM.5 4.500h12M.5 8.500h12M4.500 .5v12M8.500 .5v12" /></Icon></ViewButton>
      <ViewButton $w={40} aria-label="Page layout view"><Icon w={14} h={14}><path d="M.5 .5h13v12H.5zM3.500 2.500h7v8h-7zM5 4.500h4M5 6.500h4M5 8.500h4" /></Icon></ViewButton>
      <ViewButton $w={40} aria-label="Page break view"><Icon w={14} h={14}><path d="M.5 .5h13v12H.5zM.5 7.500h8M4.500 .5v7M8.500 .5v7" /></Icon></ViewButton>
      <IconButton $w={14} $h={20} aria-label="Zoom out"><Icon w={8} h={9}><path d="M1 4.500h8" /></Icon></IconButton>
      <Zoom type="range" min={0} max={100} defaultValue={57} aria-label="Zoom" />
      <IconButton $w={9} $h={20} aria-label="Zoom in"><Icon w={9} h={9}><path d="M0 4.500h9M4.500 0v9" /></Icon></IconButton>
      <ZoomValue>140%</ZoomValue>
    </StatusRight>
  </StatusBar>
);

const TaskbarApps = () => (
  <Apps>
    <StartButton aria-label="Start">
      <Icon w={23} h={23}>
        <defs><linearGradient id="win" x1="0" y1="0" x2="1" y2="1"><stop offset="0" stopColor="#7fdcfb" /><stop offset="1" stopColor="#0a9bf5" /></linearGradient></defs>
        <path fill="url(#win)" stroke="none" d="M0 0h11v11H0zM12 0h11v11H12zM0 12h11v11H0zM12 12h11v11H12z" />
      </Icon>
    </StartButton>
    <TaskSearch>
      <Icon w={15} h={15}><circle cx="6.5" cy="6.5" r="5.5" stroke="#dfe9ec" strokeWidth="1.8" /><path stroke="#dfe9ec" strokeWidth="1.8" d="M10.500 10.500L14.500 14.500" /></Icon>
      <BareInput type="search" placeholder="Search" aria-label="Search Windows" />
      <Icon w={45} h={24}>
        <g stroke="none">
          <path fill="#e0b23a" d="M19 8c3-5 7-4 11-2s9 0 9 5c0 6-3 12-9 12-5 0-9-3-13-8 0-3 1-5 2-7z" />
          <path fill="#7ea832" d="M19 8c2-4 5-4 8-3 4 2 11 0 12 5l-1 6c-3-1-5-4-8-4-4 0-8-1-11-4z" />
          <path fill="#f2cc38" d="M18 10c4-2 8 1 11 1 4 0 5 4 5 7-2 2-6 1-9 0-4-1-7-4-7-8z" />
          <path fill="#d8392c" d="M16 14c5 2 10 5 18 5-2 3-4 5-7 4-5-1-11-4-11-9z" />
          <path fill="#1f1a14" d="M22 8l6 1 2 4-4 3-5-3z" />
          <path fill="#9a6248" d="M0 1l5 0 3 3 17 8-1 2L6 7 1 6z" />
        </g>
        <path stroke="#a9bcc0" strokeWidth="1.2" d="M4.500 15.500v-4l1.500 1M9.500 19v-4l4-.5v4M42.500 12.500v-4l1.500 1" />
        <path stroke="#a9bcc0" strokeWidth="2" d="M2.500 15.500h2M7.500 19h2M11.500 18.500h2M41 12.500h1.500" />
      </Icon>
    </TaskSearch>
    <AppButton aria-label="Task view">
      <Icon w={24} h={22}><g stroke="none"><path fill="#e9ecee" d="M6 0h18v16H6z" /><path fill="#5f6568" d="M0 6h18v15H0z" /><path fill="#b5b8ba" d="M6 6h12v10H6z" /></g></Icon>
    </AppButton>
    <AppButton aria-label="Cube">
      <Icon w={24} h={24}>
        <g stroke="none">
          <path fill="#5a626b" d="M12 1l10 5.500v11L12 23 2 17.500v-11z" />
          <path fill="#a9b1b9" d="M12 1l10 5.500-3 2.500-7-5z" />
          <path fill="#7b848d" d="M12 1L2 6.500 5 9l7-5z" />
          <path fill="#30353b" d="M22 6.500v11l-3-1.500V9zM2 17.500L5 16h14l3 1.500L12 23z" />
          <path fill="#8c959e" d="M2 6.500v11L9 7z" />
          <path fill="#15181c" d="M12 5l7 11-10 2-4-2z" />
        </g>
      </Icon>
    </AppButton>
    <AppButton aria-label="Studio">
      <Icon w={24} h={24}>
        <defs><linearGradient id="mm" x1="0" y1="1" x2="1" y2="0"><stop offset="0" stopColor="#6a1cf5" /><stop offset=".5" stopColor="#2b5cf6" /><stop offset="1" stopColor="#0aa5fb" /></linearGradient></defs>
        <path fill="url(#mm)" stroke="none" d="M0 0h24v24H0z" />
        <path stroke="#fff" strokeWidth="2.2" d="M4 18L10 7M9.500 18l6-11M14 18l5-10v10M15 16h4" />
      </Icon>
    </AppButton>
    <AppButton $run aria-label="File Explorer">
      <Icon w={24} h={23}><g stroke="none"><path fill="#d99a1a" d="M0 1h9l2 3h13v8H0z" /><path fill="#fbcf4b" d="M0 5.500h8L10.500 3H24v19H0z" /><path fill="#0a6ec8" d="M6 15h12q1.500 0 1.500 1.500V22h-15v-5.500Q4.500 15 6 15z" /></g><path stroke="#084f94" d="M7 18.500h10" /></Icon>
    </AppButton>
    <AppButton $run aria-label="Chrome"><Chrome badge="#f07008" /></AppButton>
    <AppButton $run aria-label="Spotify">
      <Icon w={23} h={23}><circle cx="11.5" cy="11.5" r="11.5" fill="#1ed760" stroke="none" /><path stroke="#0d2b18" strokeWidth="2.2" strokeLinecap="round" d="M5 8q7-2 13.500 1.500M5.500 12q6-1.700 11.500 1.300M6 15.700q5-1.300 9.500 1.100" /></Icon>
    </AppButton>
    <AppButton $run aria-label="Task Manager">
      <Icon w={24} h={19}><path fill="#dfe8f0" stroke="#b8c2cc" d="M.5 .5h23v17H.5z" /><path fill="#8ccbf5" stroke="#2d8ad8" d="M2.500 16V12l2-1 1-6 2 5 2 1 2-1 2 2 2-1 1-7 2 7 3 1v4z" /></Icon>
    </AppButton>
    <AppButton $run aria-label="Settings">
      <Icon w={24} h={24}>
        <path fill="#858d96" stroke="none" d="M9 0h6l1 4 4-1 4 6-3 3 3 3-4 6-4-1-1 4H9l-1-4-4 1-4-6 3-3-3-3 4-6 4 1z" />
        <circle cx="12" cy="12" r="5.5" fill="#0f5fae" stroke="#e8edf2" strokeWidth="2" />
      </Icon>
    </AppButton>
    <AppButton aria-label="Calculator">
      <Icon w={18} h={24}><g stroke="none"><path fill="#59646e" d="M0 0h18v24H0z" /><path fill="#3fd0f5" d="M2 2h14v4H2z" /><path fill="#cdd5db" d="M2 8h4v4H2zM7 8h4v4H7zM12 8h4v4h-4zM2 13h4v4H2zM7 13h4v4H7zM2 18h4v4H2zM7 18h4v4H7z" /><path fill="#124a86" d="M12 13h4v9h-4z" /></g></Icon>
    </AppButton>
    <AppButton aria-label="Password Manager">
      <Icon w={22} h={22}><circle cx="11" cy="11" r="10.5" fill="#fff" stroke="none" /><circle cx="6.5" cy="11" r="2" stroke="#4285f4" strokeWidth="1.5" /><path stroke="#ea4335" strokeWidth="2" d="M9 11h3" /><path stroke="#fbbc04" strokeWidth="2" d="M12 11h2" /><path stroke="#34a853" strokeWidth="3" d="M14 11h3" /></Icon>
    </AppButton>
    <AppButton $run aria-label="Chrome profile"><Chrome badge="#8d6e63" /></AppButton>
    <AppButton $active aria-label="Excel"><ExcelLogo size={24} /></AppButton>
    <AppButton $run aria-label="Photos">
      <Icon w={22} h={22}>
        <defs><linearGradient id="ph" x1="0" y1="0" x2="1" y2="1"><stop offset="0" stopColor="#1878d8" /><stop offset="1" stopColor="#4a3fb0" /></linearGradient></defs>
        <rect width="22" height="22" rx="2" fill="url(#ph)" stroke="none" />
        <path fill="#35c3f5" stroke="none" d="M0 18L9 9q2-2 4 0l9 9v2q0 2-2 2H2q-2 0-2-2z" />
        <path fill="#1c86e0" stroke="none" d="M3 22l8-8q1.500-1 3 0l8 8z" />
        <circle cx="16" cy="4" r="2" fill="#e8f4ff" stroke="none" />
      </Icon>
    </AppButton>
  </Apps>
);

const TaskbarTray = () => (
  <Tray>
    <TrayButton $gap={18} aria-label="Hidden icons"><Icon w={12} h={6}><path strokeWidth="2" d="M.8 5.500L6 .8l5.200 4.700" /></Icon></TrayButton>
    <TrayButton $gap={15} aria-label="OneDrive">
      <Icon w={17} h={14}><path fill="#8ea9ab" stroke="none" d="M4 12a4 4 0 0 1 0-7 5 5 0 0 1 9 0 3.500 3.500 0 0 1 0 7z" /><path stroke="#fff" strokeWidth="1.3" d="M1.500 1L15.500 13.500" /></Icon>
    </TrayButton>
    <TrayButton $gap={14} aria-label="Update">
      <Icon w={16} h={16}><path strokeWidth="1.4" d="M1 7A7 7 0 0 1 13 3.500M14.500 0v4.500H10M1 15.500V11h4.500M2 12.500A7 7 0 0 0 7 15" /><circle cx="12" cy="12" r="4" fill="#0a78e0" stroke="none" /></Icon>
    </TrayButton>
    <TrayButton $gap={14} aria-label="Microphone and location">
      <Icon w={20} h={16}><g stroke="#7fe8ec"><rect x="2.5" y=".5" width="4" height="7" rx="2" /><path strokeWidth="1.2" d="M.5 5.500q0 4.500 4 4.500t4-4.500M4.500 10v3M10.500 10L19.500 5.500 17 15l-2.500-3.500z" /></g></Icon>
    </TrayButton>
    <TrayButton $gap={8} aria-label="Wi-Fi">
      <Icon w={16} h={14}><path strokeWidth="1.4" d="M.5 5a10.500 10.500 0 0 1 15 0M3 8a7 7 0 0 1 10 0M5.500 10.500a3.500 3.500 0 0 1 5 0" /><circle cx="8" cy="12.5" r="1.5" fill="#fff" stroke="none" /></Icon>
    </TrayButton>
    <TrayButton $gap={7} aria-label="Volume">
      <Icon w={16} h={14}><path strokeWidth="1.2" d="M.5 5v4h2.500l4 3.500v-11L3 5zM9 5q1.500 2 0 4M11 3q3.500 4 0 8M13 1q5 6 0 12" /></Icon>
    </TrayButton>
    <TrayButton $gap={16} aria-label="Battery">
      <Icon w={17} h={13}><path strokeWidth="1.2" d="M6 2.500h7.500q1 0 1 1v7q0 1-1 1H3q-1 0-1-1V7M16 5.500v3" /><path fill="#fff" stroke="none" d="M6 5h7v5H4zM3 0L0 5h2L1 9l4-5H3.500L5 0z" /></Icon>
    </TrayButton>
    <Clock><span>11:30 AM</span><span>2/6/2025</span></Clock>
  </Tray>
);

export default function App() {
  return (
    <Window>
      <Global />
      <TitleSection />
      <RibbonTabs />
      <Ribbon>
        <Clipboard /><Rule />
        <FontGroup /><Rule />
        <AlignmentGroup /><Rule />
        <NumberGroup /><Rule />
        <StylesGroup /><Rule />
        <CellsGroup /><Rule />
        <EditingGroup /><Rule />
        <AddinsGroup /><Rule />
        <AnalyzeGroup /><Rule />
        <Collapse aria-label="Collapse ribbon"><Icon w={10} h={10}><path d="M.5 7.500L5 3l4.500 4.500" /></Icon></Collapse>
      </Ribbon>
      <FormulaBar />
      <Sheet />
      <SheetFooter />
      <Status />
      <Taskbar>
        <Weather>
          <WeatherArt>
            <Icon w={25} h={17}>
              <g stroke="none">
                <path fill="#a9cbfa" d="M6 17a5.500 5.500 0 0 1-1-10.500A7.500 7.500 0 0 1 18 4a6.500 6.500 0 0 1 1 13z" />
                <path fill="#7fa8f0" d="M1 13q5 3 12 2t11-3a6 6 0 0 1-5 5H6q-4 0-5-4z" />
              </g>
            </Icon>
            <Badge>5</Badge>
          </WeatherArt>
          <Temps><span>31°F</span><span>Cloudy</span></Temps>
        </Weather>
        <TaskbarApps />
        <TaskbarTray />
      </Taskbar>
      <Annotation viewBox="190 152 266 86" aria-hidden>
        <path
          stroke="#0bb04b"
          strokeWidth="3"
          fill="none"
          strokeLinecap="round"
          strokeLinejoin="round"
          d="M283 158C292 158 300 157 308 158C320 160 345 157 358 159.500C372 163 384 166 397 171C411 176 420 179 430 184C438 190 443 196 447 201C450 205 451 208 449 209C445 211 437 211 428 213C405 219 370 228 345 232C335 234 320 233 306 232.500C288 231 270 231 257 229C245 227 235 225 228 222C215 216 207 208 201 201C196 195 193 188 194 184C195 178 203 171 213 165C219 161 225 160.500 232 160.500C250 160 272 161 287 160.500C294 160 300 158.500 308 158"
        />
      </Annotation>
    </Window>
  );
}
